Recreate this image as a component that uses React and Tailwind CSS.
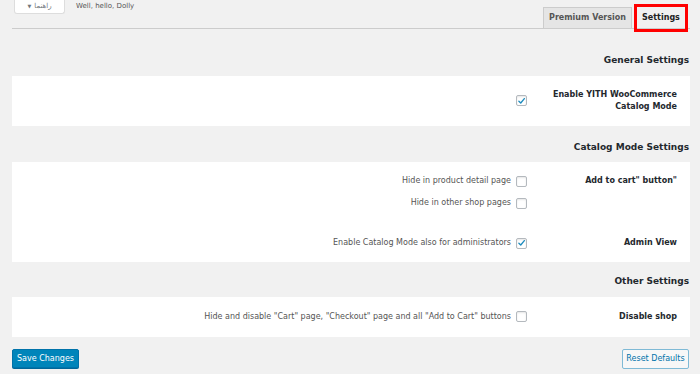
import React from 'react';

const font = { fontFamily: 'Tahoma, "DejaVu Sans", sans-serif' };

const Check = ({ checked }) => (
  <span className="inline-flex h-[11px] w-[11px] shrink-0 items-center justify-center rounded-[2px] border border-[#b4b9be] bg-white shadow-[inset_0_1px_2px_rgba(0,0,0,0.1)]">
    {checked && (
      <svg viewBox="0 0 12 12" className="h-[10px] w-[10px]">
        <path d="M2.5 6.2 L5 8.6 L9.8 2.8" fill="none" stroke="#1e8cbe" strokeWidth="1.8" strokeLinecap="round" strokeLinejoin="round" />
      </svg>
    )}
  </span>
);

const Option = ({ label, checked }) => (
  <div className="flex items-center justify-end gap-[5px] text-[8px] text-[#555]">
    <span>{label}</span>
    <Check checked={checked} />
  </div>
);

const Heading = ({ children }) => (
  <h2 className="pr-[1px] text-right text-[9px] font-bold text-[#23282d]">{children}</h2>
);

export default function App() {
  return (
    <div className="h-[374px] w-[700px] overflow-hidden bg-[#f1f1f1]" style={font}>
      <div className="flex items-start gap-[11px] pl-[14px]">
        <div className="flex h-[14px] w-[51px] items-center justify-center gap-[3px] rounded-b-[3px] border border-t-0 border-[#ddd] bg-white text-[7px] text-[#72777c]">
          <span className="text-[5px]">▼</span>
          <span style={{ fontFamily: '"DejaVu Sans", "Noto Sans", sans-serif' }}>راهنما</span>
        </div>
        <span className="pt-[1px] text-[7px] text-[#555]">Well, hello, Dolly</span>
      </div>

      <div className="ml-[12px] mr-[10px] mt-[-6px] flex h-[21px] items-end justify-end gap-[5px] border-b border-[#ccc] pr-[5px]">
        <div className="relative flex h-[21px] w-[89px] items-center justify-center border border-b-0 border-[#ccc] bg-[#e5e5e5] text-[8px] font-bold text-[#555]">
          Premium Version
        </div>
        <div className="relative flex h-[21px] w-[48px] items-center justify-center bg-[#f1f1f1] text-[8px] font-bold text-[#222]">
          Settings
          <span className="absolute left-[-3px] right-[-3px] top-[-3px] bottom-[-4px] border-[3px] border-[#ff0000]" />
        </div>
      </div>

      <div className="px-[10px] pt-[25px]">
        <Heading>General Settings</Heading>
      </div>
      <div className="ml-[12px] mr-[10px] mt-[8px] flex h-[50px] items-center bg-white">
        <div className="flex flex-1 justify-end pr-[12px]">
          <Check checked />
        </div>
        <div className="w-[151px] pr-[13px] text-right text-[8px] font-bold leading-[12px] text-[#23282d]">
          Enable YITH WooCommerce Catalog Mode
        </div>
      </div>

      <div className="px-[10px] pt-[15px]">
        <Heading>Catalog Mode Settings</Heading>
      </div>
      <div className="ml-[12px] mr-[10px] mt-[8px] flex h-[100px] flex-col bg-white pt-[13px]">
        <div className="flex items-start">
          <div className="flex flex-1 flex-col items-end gap-[10px] pr-[12px]">
            <Option label="Hide in product detail page" />
            <Option label="Hide in other shop pages" />
          </div>
          <div className="w-[151px] pr-[13px] text-right text-[8px] font-bold text-[#23282d]">
            Add to cart" button"
          </div>
        </div>
        <div className="mt-[28px] flex items-center">
          <div className="flex flex-1 justify-end pr-[12px]">
            <Option label="Enable Catalog Mode also for administrators" checked />
          </div>
          <div className="w-[151px] pr-[13px] text-right text-[8px] font-bold text-[#23282d]">
            Admin View
          </div>
        </div>
      </div>

      <div className="px-[10px] pt-[13px]">
        <Heading>Other Settings</Heading>
      </div>
      <div className="ml-[12px] mr-[10px] mt-[8px] flex h-[40px] items-center bg-white">
        <div className="flex flex-1 justify-end pr-[12px]">
          <Option label={'Hide and disable "Cart" page, "Checkout" page and all "Add to Cart" buttons'} />
        </div>
        <div className="w-[151px] pr-[13px] text-right text-[8px] font-bold text-[#23282d]">
          Disable shop
        </div>
      </div>

      <div className="ml-[12px] mr-[10px] mt-[12px] flex items-center justify-between">
        <button className="h-[19px] w-[67px] rounded-[2px] border border-[#0073aa] bg-[#0085ba] text-[8px] text-white shadow-[0_1px_0_#006799]">
          Save Changes
        </button>
        <button className="mr-[1px] h-[20px] w-[67px] rounded-[2px] border border-[#7fbad6] bg-[#f7f7f7] text-[8px] text-[#0073aa]">
          Reset Defaults
        </button>
      </div>
    </div>
  );
}
